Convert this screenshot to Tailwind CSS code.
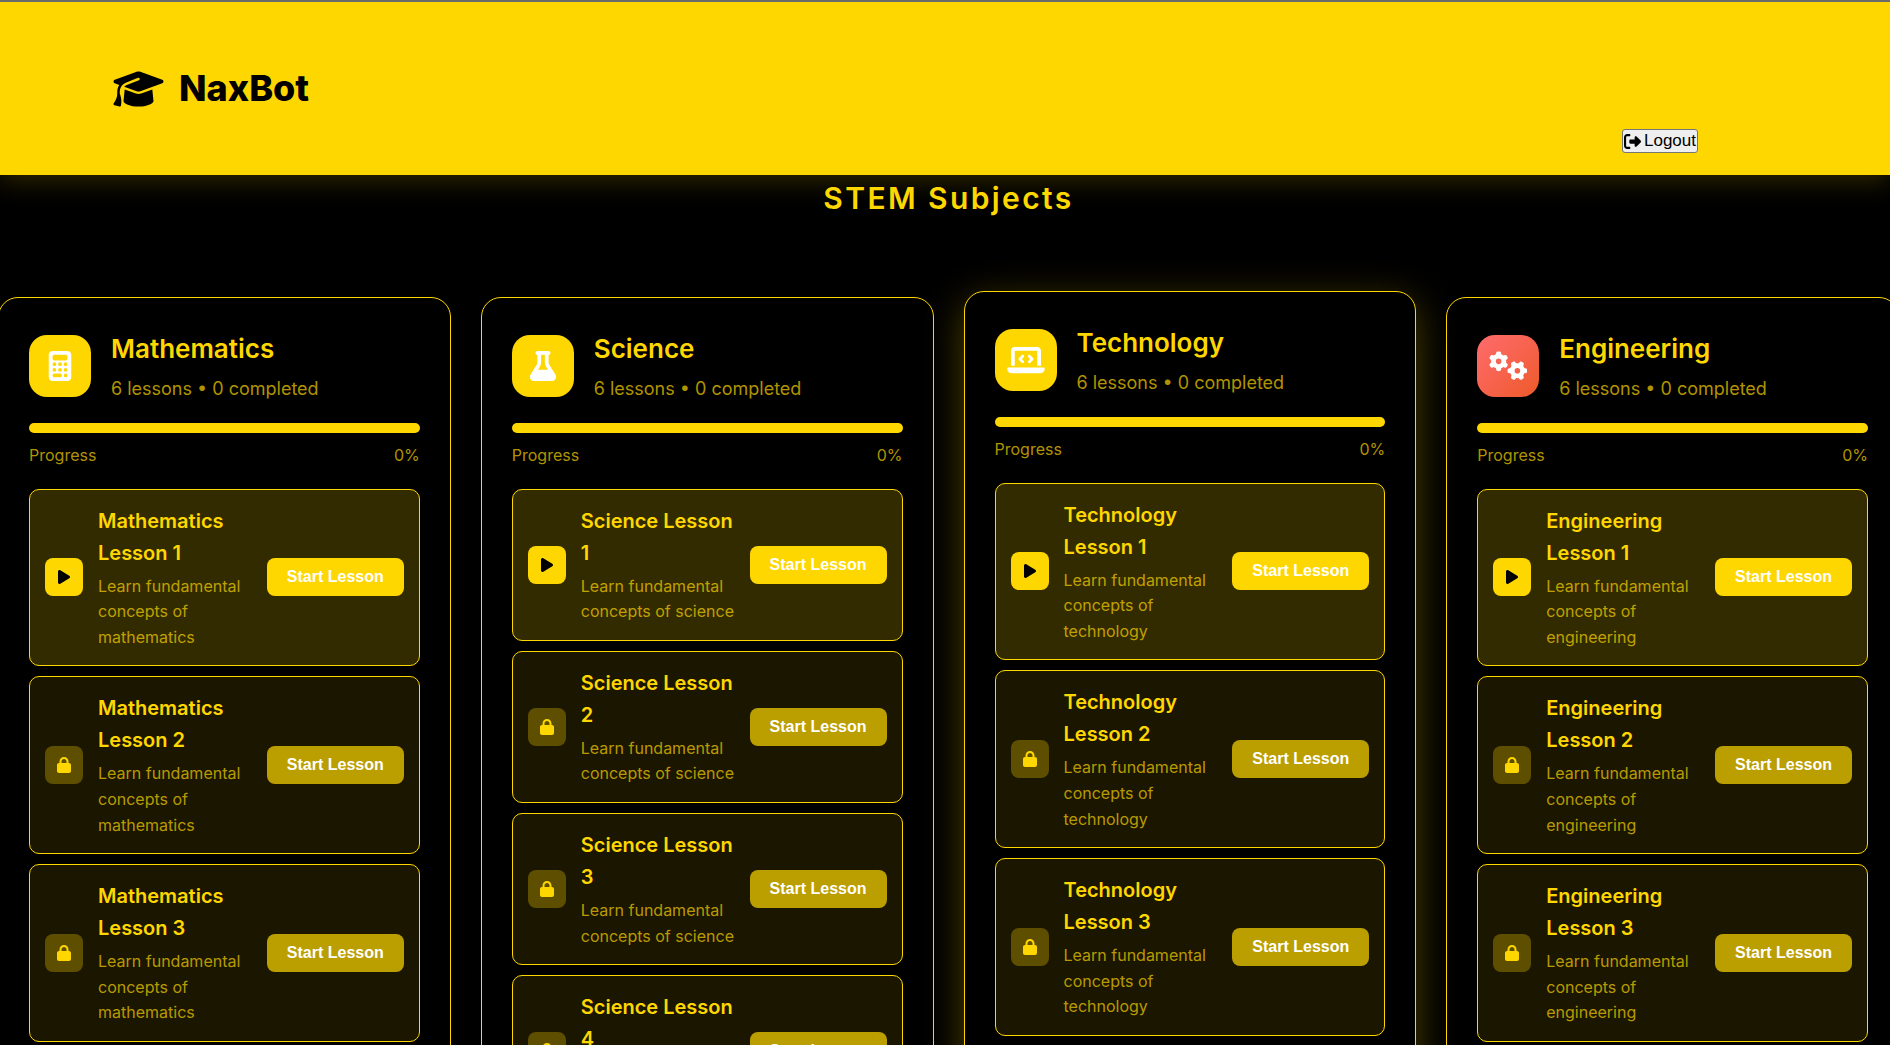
<!DOCTYPE html>
<html lang="en">
<head>
<meta charset="UTF-8">
<meta name="viewport" content="width=device-width, initial-scale=1.0">
<title>NaxBot</title>
<script src="https://cdn.jsdelivr.net/npm/@tailwindcss/browser@4"></script>
</head>
<body class="overflow-x-hidden bg-black font-[Inter,sans-serif] leading-[1.6] text-[#ffd700]">

<svg class="hidden" aria-hidden="true">
  <symbol id="i-calculator" viewBox="0 0 384 512"><path d="M64 0C28.700 0 0 28.700 0 64V448c0 35.300 28.700 64 64 64H320c35.300 0 64-28.700 64-64V64c0-35.300-28.700-64-64-64H64zM96 64H288c17.700 0 32 14.300 32 32v32c0 17.700-14.300 32-32 32H96c-17.700 0-32-14.300-32-32V96c0-17.700 14.300-32 32-32zm32 160a32 32 0 1 1 -64 0 32 32 0 1 1 64 0zM96 352a32 32 0 1 1 0-64 32 32 0 1 1 0 64zM64 416c0-17.700 14.300-32 32-32h96c17.700 0 32 14.300 32 32s-14.300 32-32 32H96c-17.700 0-32-14.300-32-32zM192 256a32 32 0 1 1 0-64 32 32 0 1 1 0 64zm32 64a32 32 0 1 1 -64 0 32 32 0 1 1 64 0zm64-64a32 32 0 1 1 0-64 32 32 0 1 1 0 64zm32 64a32 32 0 1 1 -64 0 32 32 0 1 1 64 0zM288 448a32 32 0 1 1 0-64 32 32 0 1 1 0 64z"/></symbol>
  <symbol id="i-flask" viewBox="0 0 448 512"><path d="M288 0H160 128C110.300 0 96 14.300 96 32s14.300 32 32 32V196.800c0 11.800-3.300 23.500-9.500 33.500L10.300 406.200C3.600 417.200 0 429.700 0 442.600C0 480.900 31.100 512 69.400 512H378.600c38.300 0 69.400-31.100 69.400-69.400c0-12.800-3.600-25.400-10.300-36.400L329.500 230.400c-6.200-10.100-9.500-21.700-9.500-33.500V64c17.700 0 32-14.300 32-32s-14.300-32-32-32H288zM192 196.800V64h64V196.800c0 23.700 6.600 46.900 19 67.100L309.500 320h-171L173 263.900c12.400-20.200 19-43.400 19-67.100z"/></symbol>
  <symbol id="i-laptop" viewBox="0 0 640 512"><path d="M64 96c0-35.300 28.700-64 64-64H512c35.300 0 64 28.700 64 64V352H512V96H128V352H64V96zM0 403.200C0 392.600 8.600 384 19.200 384H620.800c10.600 0 19.200 8.600 19.200 19.200c0 42.400-34.400 76.800-76.800 76.800H76.800C34.400 480 0 445.600 0 403.200zM281 209l-31 31 31 31c9.400 9.400 9.400 24.600 0 33.900s-24.600 9.400-33.900 0l-48-48c-9.400-9.400-9.400-24.600 0-33.900l48-48c9.400-9.400 24.600-9.400 33.900 0s9.400 24.600 0 33.900zM393 175l48 48c9.400 9.400 9.400 24.600 0 33.900l-48 48c-9.400 9.400-24.600 9.400-33.900 0s-9.400-24.600 0-33.900l31-31-31-31c-9.400-9.400-9.400-24.600 0-33.900s24.600-9.400 33.900 0z"/></symbol>
  <symbol id="i-gears" viewBox="0 0 640 512">
    <path id="gear" d="M308.500 135.300c7.100-6.300 9.900-16.200 6.200-25c-2.300-5.300-4.800-10.500-7.600-15.500L304 89.400c-3-5-6.300-9.900-9.800-14.600c-5.700-7.600-15.700-10.100-24.700-7.100l-28.200 9.300c-10.700-8.800-23-16-36.200-20.900L199 27.100c-1.900-9.300-9.100-16.700-18.500-17.800C173.900 8.400 167.200 8 160.400 8h-.7c-6.800 0-13.500 .4-20.100 1.200c-9.400 1.100-16.600 8.600-18.500 17.800L115 56.100c-13.300 5-25.500 12.100-36.200 20.900L50.500 67.800c-9-3-19-.5-24.700 7.100c-3.500 4.700-6.800 9.600-9.900 14.600l-3 5.300c-2.800 5-5.300 10.200-7.600 15.600c-3.700 8.700-.9 18.600 6.200 25l22.200 19.800C32.600 161.900 32 168.900 32 176s.6 14.100 1.700 20.900L11.500 216.700c-7.100 6.300-9.900 16.200-6.200 25c2.300 5.300 4.800 10.500 7.600 15.600l3 5.200c3 5.100 6.300 9.900 9.900 14.600c5.700 7.600 15.700 10.100 24.700 7.100l28.200-9.300c10.700 8.800 23 16 36.200 20.900l6.100 29.100c1.900 9.300 9.100 16.700 18.500 17.800c6.700 .8 13.500 1.200 20.400 1.200s13.700-.4 20.400-1.200c9.400-1.100 16.600-8.600 18.500-17.800l6.100-29.100c13.300-5 25.500-12.100 36.200-20.900l28.200 9.300c9 3 19 .5 24.700-7.100c3.500-4.700 6.800-9.500 9.800-14.600l3.100-5.400c2.800-5 5.300-10.200 7.600-15.500c3.700-8.700 .9-18.600-6.200-25l-22.200-19.800c1.100-6.800 1.700-13.800 1.700-20.900s-.6-14.100-1.700-20.900l22.200-19.800zM112 176a48 48 0 1 1 96 0 48 48 0 1 1 -96 0z"/>
    <use href="#gear" transform="translate(480 336) rotate(90) translate(-160 -176)"/>
  </symbol>
  <symbol id="i-play" viewBox="0 0 384 512"><path d="M73 39c-14.800-9.100-33.400-9.400-48.500-.9S0 62.600 0 80V432c0 17.400 9.400 33.400 24.500 41.900s33.700 8.100 48.500-.9L361 297c14.300-8.700 23-24.200 23-41s-8.700-32.200-23-41L73 39z"/></symbol>
  <symbol id="i-lock" viewBox="0 0 448 512"><path d="M144 144v48H304V144c0-44.200-35.800-80-80-80s-80 35.800-80 80zM80 192V144C80 64.500 144.500 0 224 0s144 64.500 144 144v48h16c35.300 0 64 28.700 64 64V448c0 35.300-28.700 64-64 64H64c-35.300 0-64-28.700-64-64V256c0-35.300 28.700-64 64-64H80z"/></symbol>
</svg>

<header class="flex h-[175px] items-center justify-between border-t-2 border-[#6b6b6b] bg-[#ffd700] pr-48 pl-[113px] text-black shadow-[0_5px_25px_rgba(255,215,0,0.2)]">
  <div class="flex items-center gap-[15px]">
    <svg class="h-10 w-[51px]" viewBox="0 0 640 512" fill="currentColor" aria-hidden="true"><path d="M320 32c-8.100 0-16.100 1.400-23.700 4.100L15.800 137.400C6.300 140.900 0 149.900 0 160s6.300 19.100 15.800 22.600l57.900 20.900C57.300 229.300 48 259.800 48 291.900v28.100c0 28.400-10.800 57.700-22.300 80.800c-6.500 13-13.900 25.800-22.500 37.600C0 442.700-.9 448.300 .9 453.400s6 8.900 11.200 10.200l64 16c4.200 1.100 8.700 .3 12.400-2s6.300-6.100 7.100-10.400c8.600-42.800 4.300-81.200-2.100-108.700C90.300 344.300 86 329.800 80 316.500V291.900c0-30.200 10.200-58.700 27.900-81.500c12.900-15.500 29.600-28 49.200-35.700l157-61.700c8.200-3.200 17.500 .8 20.700 9s-.8 17.500-9 20.700l-157 61.700c-12.400 4.900-23.300 12.400-32.200 21.600l159.600 57.600c7.600 2.700 15.600 4.100 23.700 4.100s16.100-1.400 23.700-4.100L624.200 182.600c9.500-3.400 15.800-12.500 15.800-22.600s-6.300-19.100-15.800-22.600L343.700 36.100C336.100 33.400 328.100 32 320 32zM128 408c0 35.300 86 72 192 72s192-36.700 192-72L496.700 262.600 354.500 314c-11.100 4-22.800 6-34.500 6s-23.500-2-34.500-6L143.300 262.600 128 408z"/></svg>
    <span class="text-[36px] font-extrabold">NaxBot</span>
  </div>
  <button type="button" class="mb-[22px] flex h-6 items-center gap-[3px] self-end rounded-[3px] border border-[#767676] bg-[#efefef] px-px font-['Liberation_Sans',sans-serif] text-[17px] leading-5">
    <svg class="size-[17px]" viewBox="0 0 512 512" fill="currentColor" aria-hidden="true"><path d="M377.900 105.900L500.700 228.700c7.200 7.200 11.300 17.100 11.300 27.300s-4.100 20.100-11.300 27.300L377.900 406.100c-6.400 6.400-15 9.900-24 9.900c-18.700 0-33.900-15.200-33.900-33.900l0-62.100-128 0c-17.700 0-32-14.300-32-32l0-64c0-17.700 14.300-32 32-32l128 0 0-62.100c0-18.700 15.200-33.900 33.900-33.900c9 0 17.600 3.600 24 9.900zM160 96L96 96c-17.700 0-32 14.300-32 32l0 256c0 17.700 14.300 32 32 32l64 0c17.700 0 32 14.300 32 32s-14.300 32-32 32l-64 0c-53 0-96-43-96-96L0 128C0 75 43 32 96 32l64 0c17.700 0 32 14.300 32 32s-14.300 32-32 32z"/></svg>
    Logout
  </button>
</header>

<main class="-mr-[9px] -ml-0.5">
  <h1 class="mb-[76px] text-center text-[30px] leading-[46px] font-semibold tracking-[0.08em]">STEM Subjects</h1>
  <div id="subjects" class="grid grid-cols-4 items-start gap-[30px]"></div>
</main>

<script>
const subjects = [
  { name: "Mathematics", icon: "calculator", badge: "bg-[#ffd700]", card: "" },
  { name: "Science", icon: "flask", badge: "bg-[#ffd700]", card: "" },
  { name: "Technology", icon: "laptop", badge: "bg-[#ffd700]", card: "-translate-y-1.5 shadow-[0_10px_38px_rgba(255,215,0,0.3)]" },
  { name: "Engineering", icon: "gears", badge: "bg-linear-135 from-[#ff6b6b] to-[#ee5a24]", card: "" }
];

function lesson(subject, n) {
  const open = n === 1;
  return `
    <li class="flex items-center gap-[15px] rounded-[10px] border border-[#ffd700] p-[15px] ${open ? "bg-[#332b00]" : "bg-[#1a1600]"}">
      <span class="flex size-[38px] shrink-0 items-center justify-center rounded-lg ${open ? "bg-[#ffd700] text-black" : "bg-[#5e4f00]"}">
        <svg class="h-4 w-4" fill="currentColor" aria-hidden="true"><use href="#i-${open ? "play" : "lock"}"/></svg>
      </span>
      <div class="min-w-0 flex-1">
        <h3 class="mb-[5px] text-[20px] leading-8 font-semibold">${subject.name} Lesson ${n}</h3>
        <p class="text-[16px] text-[#ffd700]/70">Learn fundamental concepts of ${subject.name.toLowerCase()}</p>
      </div>
      <button type="button" class="h-[38px] shrink-0 rounded-lg px-5 font-['Liberation_Sans',sans-serif] text-[16px] leading-[18px] font-bold whitespace-nowrap text-white ${open ? "bg-[#ffd700]" : "bg-[#bb9e00]"}">Start Lesson</button>
    </li>`;
}

document.getElementById("subjects").innerHTML = subjects.map(s => `
  <section class="rounded-[20px] border border-[#ffd700] bg-black p-[30px] ${s.card}">
    <div class="mb-5 flex items-center gap-5">
      <div class="flex size-[62px] shrink-0 items-center justify-center rounded-[18px] text-white ${s.badge}">
        <svg class="h-[30px] w-[38px]" fill="currentColor" aria-hidden="true"><use href="#i-${s.icon}"/></svg>
      </div>
      <div>
        <h2 class="mb-[5px] text-[26px] leading-[41px] font-semibold">${s.name}</h2>
        <p class="text-[18px] leading-[29px] text-[#ffd700]/70">6 lessons • 0 completed</p>
      </div>
    </div>
    <div class="h-2.5 rounded-full bg-[#ffd700]"></div>
    <div class="mt-2.5 mb-5 flex justify-between text-[16px] text-[#ffd700]/70"><span>Progress</span><span>0%</span></div>
    <ul class="flex flex-col gap-2.5">${[1, 2, 3, 4, 5, 6].map(n => lesson(s, n)).join("")}</ul>
  </section>`).join("");
</script>
</body>
</html>
